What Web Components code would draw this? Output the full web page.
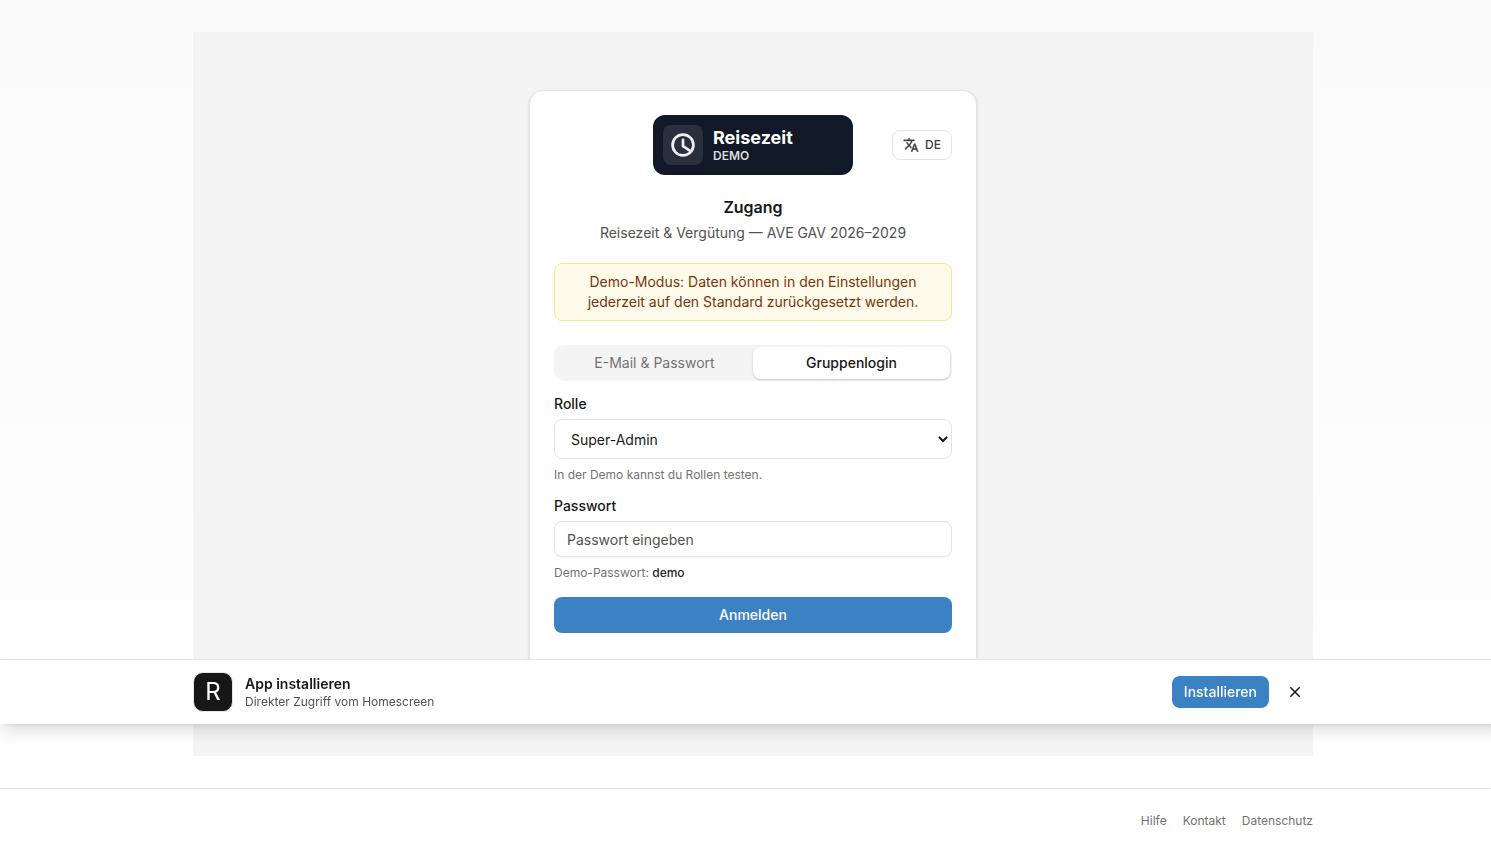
<!DOCTYPE html>
<html lang="de">
<head>
  <meta charset="UTF-8" />
  <meta name="viewport" content="width=device-width, initial-scale=1.0" />
  <title>Reisezeit – Zugang</title>
  <style>
    :root {
      --primary: #3b82c4;
      --border: #e5e5e5;
      --muted: #f4f4f4;
      --muted-text: #737373;
      --soft-text: #525252;
      --text: #171717;
      --gutter: 15px;
    }
    html {
      overflow-x: hidden;
    }
    body {
      margin: 0 calc(var(--gutter) * -1) 0 0;
      min-height: 100vh;
      display: flex;
      flex-direction: column;
      background: linear-gradient(#fafafa, #fff);
      color: var(--text);
      font-family: Inter, "Liberation Sans", sans-serif;
      font-size: 14px;
      line-height: 20px;
    }
  </style>
</head>
<body>
  <page-shell>
    <login-card></login-card>
    <install-banner slot="banner"></install-banner>
  </page-shell>
  <site-footer>
    <a href="#hilfe">Hilfe</a>
    <a href="#kontakt">Kontakt</a>
    <a href="#datenschutz">Datenschutz</a>
  </site-footer>

  <script>
    function define(name, html) {
      const template = document.createElement('template');
      template.innerHTML = '<style>*, ::before { box-sizing: border-box; }</style>' + html;
      customElements.define(name, class extends HTMLElement {
        constructor() {
          super();
          this.attachShadow({ mode: 'open' }).appendChild(template.content.cloneNode(true));
        }
      });
    }

    define('page-shell', `
      <style>
        :host {
          position: relative;
          flex: 1;
          display: flex;
          justify-content: center;
          padding: 32px 16px;
        }
        main {
          flex: 1;
          max-width: 1120px;
          display: flex;
          align-items: center;
          justify-content: center;
          padding: 48px 16px;
          background: var(--muted);
        }
        ::slotted([slot="banner"]) {
          position: absolute;
          left: 0;
          right: 0;
          bottom: 64px;
        }
      </style>
      <main><slot></slot></main>
      <slot name="banner"></slot>
    `);

    define('brand-logo', `
      <style>
        :host {
          display: flex;
          align-items: center;
          gap: 10px;
          width: 200px;
          height: 60px;
          padding: 10px;
          border-radius: 12px;
          background: #111827;
          color: #fff;
        }
        .mark {
          display: flex;
          align-items: center;
          justify-content: center;
          width: 40px;
          height: 40px;
          border-radius: 8px;
          background: #292f3d;
        }
        .name { font-size: 18px; line-height: 22px; font-weight: 700; }
        .tag { font-size: 12px; line-height: 14px; font-weight: 600; color: #dbdcdf; }
      </style>
      <div class="mark">
        <svg width="24" height="24" viewBox="0 0 24 24" fill="none" stroke="#eeeeef" stroke-width="2.7" aria-hidden="true">
          <circle cx="12" cy="12" r="10.4" />
          <path d="M12 6.8v6.4l6.4 4.2" stroke-linecap="round" stroke-linejoin="round" />
        </svg>
      </div>
      <div>
        <div class="name">Reisezeit</div>
        <div class="tag">DEMO</div>
      </div>
    `);

    define('language-button', `
      <style>
        :host { display: block; }
        button {
          display: flex;
          align-items: center;
          gap: 6px;
          height: 30px;
          padding: 0 10px;
          border: 1px solid var(--border);
          border-radius: 8px;
          background: #fff;
          color: #404040;
          font: 500 12px/16px Inter, sans-serif;
        }
      </style>
      <button type="button" aria-label="Sprache: DE">
        <svg width="16" height="16" viewBox="0 0 24 24" fill="currentColor" stroke="currentColor" stroke-width="0.5" aria-hidden="true">
          <path d="M12.87 15.07l-2.54-2.51.03-.03A17.52 17.52 0 0 0 14.07 6H17V4h-7V2H8v2H1v2h11.17C11.5 7.92 10.44 9.75 9 11.35 8.07 10.32 7.3 9.19 6.69 8h-2c.73 1.63 1.73 3.17 2.98 4.56l-5.09 5.02L4 19l5-5 3.11 3.11.76-2.04zM18.5 10h-2L12 22h2l1.12-3h4.75L21 22h2l-4.5-12zm-2.62 7l1.62-4.33L19.12 17h-3.24z" />
        </svg>
        DE
      </button>
    `);

    define('login-tabs', `
      <style>
        :host {
          display: flex;
          padding: 2px;
          border-radius: 10px;
          background: var(--muted);
        }
        button {
          flex: 1;
          height: 32px;
          padding: 0 12px;
          border: 0;
          border-radius: 8px;
          background: none;
          color: var(--muted-text);
          font: 400 14px/20px Inter, sans-serif;
        }
        button[aria-selected="true"] {
          background: #fff;
          color: var(--text);
          font-weight: 500;
          box-shadow: 0 1px 3px rgba(0, 0, 0, 0.1), 0 1px 2px rgba(0, 0, 0, 0.1);
        }
      </style>
      <button type="button" role="tab" aria-selected="false">E-Mail &amp; Passwort</button>
      <button type="button" role="tab" aria-selected="true">Gruppenlogin</button>
    `);

    define('login-card', `
      <style>
        :host {
          display: block;
          flex: 1;
          max-width: 448px;
          padding: 24px 24px 64px;
          border: 1px solid var(--border);
          border-radius: 14px;
          background: #fff;
          box-shadow: 0 1px 3px rgba(0, 0, 0, 0.1), 0 1px 2px rgba(0, 0, 0, 0.1);
          box-sizing: border-box;
        }
        header {
          display: grid;
          grid-template-columns: 1fr auto 1fr;
          align-items: center;
        }
        brand-logo { grid-column: 2; box-sizing: border-box; }
        language-button { justify-self: end; }
        h1 {
          margin: 20px 0 4px;
          font-size: 16px;
          line-height: 24px;
          font-weight: 600;
          text-align: center;
        }
        .subtitle { margin: 0; color: var(--soft-text); text-align: center; }
        .notice {
          margin: 20px 0 24px;
          padding: 8px 12px;
          border: 1px solid #fde68a;
          border-radius: 8px;
          background: #fffbeb;
          color: #78350f;
          text-align: center;
          text-wrap: balance;
        }
        form {
          display: flex;
          flex-direction: column;
          gap: 16px;
          margin-top: 16px;
        }
        .field { display: flex; flex-direction: column; gap: 8px; }
        label { line-height: 14px; font-weight: 500; }
        select, input {
          width: 100%;
          border: 1px solid var(--border);
          border-radius: 8px;
          background: #fff;
          color: var(--text);
          font: 400 14px/20px Inter, sans-serif;
        }
        select { height: 40px; padding: 8px 12px; }
        input {
          height: 36px;
          padding: 4px 12px;
          box-shadow: 0 1px 2px rgba(0, 0, 0, 0.05);
        }
        input::placeholder { color: var(--soft-text); opacity: 1; }
        .hint { margin: 0; font-size: 12px; line-height: 16px; color: var(--muted-text); }
        .hint strong { font-weight: 500; color: #262626; }
        .submit {
          height: 36px;
          border: 0;
          border-radius: 8px;
          background: var(--primary);
          color: #fff;
          font: 500 14px/20px Inter, sans-serif;
        }
      </style>
      <header>
        <brand-logo></brand-logo>
        <language-button></language-button>
      </header>
      <h1>Zugang</h1>
      <p class="subtitle">Reisezeit &amp; Vergütung — AVE GAV 2026–2029</p>
      <p class="notice">Demo-Modus: Daten können in den Einstellungen jederzeit auf den Standard zurückgesetzt werden.</p>
      <login-tabs role="tablist"></login-tabs>
      <form>
        <div class="field">
          <label for="role">Rolle</label>
          <select id="role">
            <option>Super-Admin</option>
          </select>
          <p class="hint">In der Demo kannst du Rollen testen.</p>
        </div>
        <div class="field">
          <label for="password">Passwort</label>
          <input id="password" type="password" placeholder="Passwort eingeben" />
          <p class="hint">Demo-Passwort: <strong>demo</strong></p>
        </div>
        <button class="submit" type="button">Anmelden</button>
      </form>
    `);

    define('install-banner', `
      <style>
        :host {
          display: block;
          padding: 12px 16px;
          border-top: 1px solid var(--border);
          background: rgba(255, 255, 255, 0.95);
          backdrop-filter: blur(12px);
          box-shadow: 0 10px 15px -3px rgba(0, 0, 0, 0.12), 0 4px 6px -4px rgba(0, 0, 0, 0.12);
        }
        .row {
          display: flex;
          align-items: center;
          gap: 12px;
          max-width: 1120px;
          margin: 0 auto;
        }
        .app {
          display: flex;
          align-items: center;
          justify-content: center;
          width: 40px;
          height: 40px;
          border: 1px solid var(--border);
          border-radius: 10px;
          background: #171717;
          color: #fff;
          font-size: 24px;
          line-height: 24px;
        }
        .text { flex: 1; }
        .title { font-weight: 600; }
        .sub { font-size: 12px; line-height: 16px; color: var(--soft-text); }
        .actions { display: flex; align-items: center; gap: 8px; }
        button {
          height: 32px;
          border: 0;
          border-radius: 8px;
          font: 500 14px/20px Inter, sans-serif;
        }
        .install { padding: 0 12px; background: var(--primary); color: #fff; }
        .close {
          display: flex;
          align-items: center;
          justify-content: center;
          width: 36px;
          padding: 0;
          background: none;
          color: var(--text);
        }
      </style>
      <div class="row">
        <div class="app">R</div>
        <div class="text">
          <div class="title">App installieren</div>
          <div class="sub">Direkter Zugriff vom Homescreen</div>
        </div>
        <div class="actions">
          <button class="install" type="button">Installieren</button>
          <button class="close" type="button" aria-label="Schließen">
            <svg width="16" height="16" viewBox="0 0 16 16" fill="none" stroke="currentColor" stroke-width="1.5" aria-hidden="true">
              <path d="M3.3 3.3l9.4 9.4M12.7 3.3l-9.4 9.4" />
            </svg>
          </button>
        </div>
      </div>
    `);

    define('site-footer', `
      <style>
        :host {
          display: block;
          padding: 24px 16px;
          border-top: 1px solid var(--border);
          background: #fff;
          font-size: 12px;
          line-height: 16px;
        }
        nav {
          display: flex;
          justify-content: flex-end;
          gap: 16px;
          max-width: 1120px;
          margin: 0 auto;
        }
        ::slotted(a) { color: var(--muted-text); text-decoration: none; }
      </style>
      <nav><slot></slot></nav>
    `);
  </script>
</body>
</html>
